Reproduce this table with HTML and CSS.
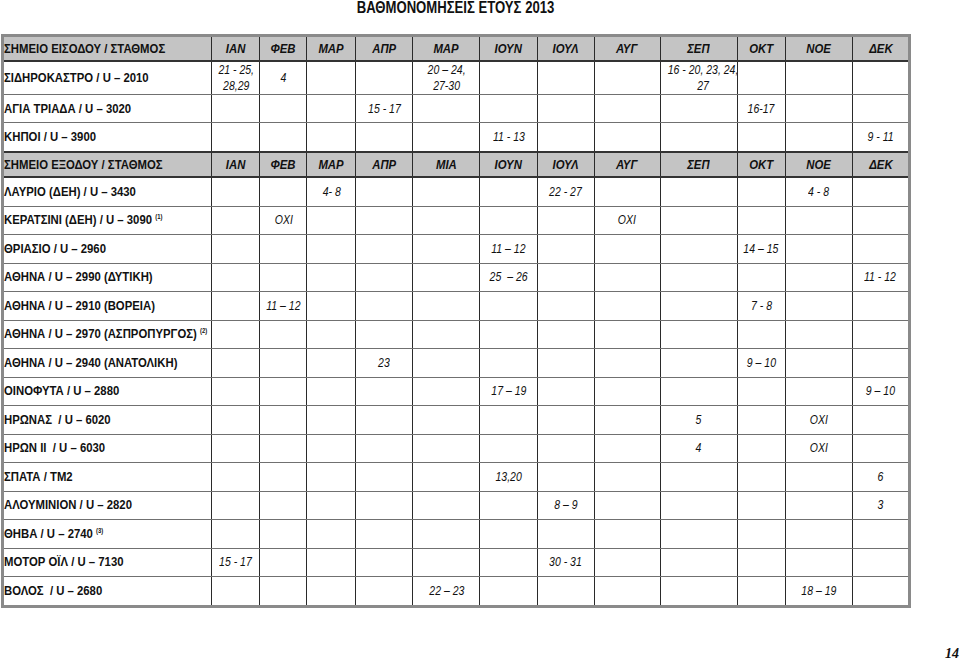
FILE: index.html
```html
<!DOCTYPE html>
<html lang="el">
<head>
<meta charset="utf-8">
<title>ΒΑΘΜΟΝΟΜΗΣΕΙΣ ΕΤΟΥΣ 2013</title>
<link rel="stylesheet" href="styles.css">
</head>
<body>
<div class="page">
  <div class="sheet">
    <h1 class="title"><span class="t">ΒΑΘΜΟΝΟΜΗΣΕΙΣ ΕΤΟΥΣ 2013</span></h1>
    <table class="grid">
      <colgroup>
        <col class="c-name"><col class="c48"><col class="c47"><col class="c49"><col class="c57"><col class="c67"><col class="c57"><col class="c57"><col class="c66"><col class="c77"><col class="c48"><col class="c67"><col class="c57">
      </colgroup>
      <tbody>
        <tr class="head">
          <th class="name"><span class="t">ΣΗΜΕΙΟ ΕΙΣΟΔΟΥ / ΣΤΑΘΜΟΣ</span></th>
          <th><span class="t">ΙΑΝ</span></th><th><span class="t">ΦΕΒ</span></th><th><span class="t">ΜΑΡ</span></th><th><span class="t">ΑΠΡ</span></th><th><span class="t">ΜΑΡ</span></th><th><span class="t">ΙΟΥΝ</span></th><th><span class="t">ΙΟΥΛ</span></th><th><span class="t">ΑΥΓ</span></th><th><span class="t">ΣΕΠ</span></th><th><span class="t">ΟΚΤ</span></th><th><span class="t">ΝΟΕ</span></th><th><span class="t">ΔΕΚ</span></th>
        </tr>
        <tr class="tall">
          <td class="name"><span class="t">ΣΙΔΗΡΟΚΑΣΤΡΟ / U – 2010</span></td>
          <td><span class="t">21 - 25,<br>28,29</span></td><td><span class="t">4</span></td><td></td><td></td><td><span class="t">20 – 24,<br>27-30</span></td><td></td><td></td><td></td><td><span class="t">16 - 20, 23, 24,<br>27</span></td><td></td><td></td><td></td>
        </tr>
        <tr class="r28">
          <td class="name"><span class="t">ΑΓΙΑ ΤΡΙΑΔΑ / U – 3020</span></td>
          <td></td><td></td><td></td><td><span class="t">15 - 17</span></td><td></td><td></td><td></td><td></td><td></td><td><span class="t">16-17</span></td><td></td><td></td>
        </tr>
        <tr class="r29">
          <td class="name"><span class="t">ΚΗΠΟΙ / U – 3900</span></td>
          <td></td><td></td><td></td><td></td><td></td><td><span class="t">11 - 13</span></td><td></td><td></td><td></td><td></td><td></td><td><span class="t">9 - 11</span></td>
        </tr>
        <tr class="head">
          <th class="name"><span class="t">ΣΗΜΕΙΟ ΕΞΟΔΟΥ / ΣΤΑΘΜΟΣ</span></th>
          <th><span class="t">ΙΑΝ</span></th><th><span class="t">ΦΕΒ</span></th><th><span class="t">ΜΑΡ</span></th><th><span class="t">ΑΠΡ</span></th><th><span class="t">ΜΙΑ</span></th><th><span class="t">ΙΟΥΝ</span></th><th><span class="t">ΙΟΥΛ</span></th><th><span class="t">ΑΥΓ</span></th><th><span class="t">ΣΕΠ</span></th><th><span class="t">ΟΚΤ</span></th><th><span class="t">ΝΟΕ</span></th><th><span class="t">ΔΕΚ</span></th>
        </tr>
        <tr class="row">
          <td class="name"><span class="t">ΛΑΥΡΙΟ (ΔΕΗ) / U – 3430</span></td>
          <td></td><td></td><td><span class="t">4- 8</span></td><td></td><td></td><td></td><td><span class="t">22 - 27</span></td><td></td><td></td><td></td><td><span class="t">4 - 8</span></td><td></td>
        </tr>
        <tr class="row">
          <td class="name"><span class="t">ΚΕΡΑΤΣΙΝΙ (ΔΕΗ) / U – 3090 <sup>(1)</sup></span></td>
          <td></td><td><span class="t">OXI</span></td><td></td><td></td><td></td><td></td><td></td><td><span class="t">OXI</span></td><td></td><td></td><td></td><td></td>
        </tr>
        <tr class="row">
          <td class="name"><span class="t">ΘΡΙΑΣΙΟ / U – 2960</span></td>
          <td></td><td></td><td></td><td></td><td></td><td><span class="t">11 – 12</span></td><td></td><td></td><td></td><td><span class="t">14 – 15</span></td><td></td><td></td>
        </tr>
        <tr class="row">
          <td class="name"><span class="t">ΑΘΗΝΑ / U – 2990 (ΔΥΤΙΚΗ)</span></td>
          <td></td><td></td><td></td><td></td><td></td><td><span class="t">25 &nbsp;– 26</span></td><td></td><td></td><td></td><td></td><td></td><td><span class="t">11 - 12</span></td>
        </tr>
        <tr class="row">
          <td class="name"><span class="t">ΑΘΗΝΑ / U – 2910 (ΒΟΡΕΙΑ)</span></td>
          <td></td><td><span class="t">11 – 12</span></td><td></td><td></td><td></td><td></td><td></td><td></td><td></td><td><span class="t">7 - 8</span></td><td></td><td></td>
        </tr>
        <tr class="row">
          <td class="name"><span class="t">ΑΘΗΝΑ / U – 2970 (ΑΣΠΡΟΠΥΡΓΟΣ) <sup>(2)</sup></span></td>
          <td></td><td></td><td></td><td></td><td></td><td></td><td></td><td></td><td></td><td></td><td></td><td></td>
        </tr>
        <tr class="row">
          <td class="name"><span class="t">ΑΘΗΝΑ / U – 2940 (ΑΝΑΤΟΛΙΚΗ)</span></td>
          <td></td><td></td><td></td><td><span class="t">23</span></td><td></td><td></td><td></td><td></td><td></td><td><span class="t">9 – 10</span></td><td></td><td></td>
        </tr>
        <tr class="row">
          <td class="name"><span class="t">ΟΙΝΟΦΥΤΑ / U – 2880</span></td>
          <td></td><td></td><td></td><td></td><td></td><td><span class="t">17 – 19</span></td><td></td><td></td><td></td><td></td><td></td><td><span class="t">9 – 10</span></td>
        </tr>
        <tr class="row">
          <td class="name"><span class="t">ΗΡΩΝΑΣ &nbsp;/ U – 6020</span></td>
          <td></td><td></td><td></td><td></td><td></td><td></td><td></td><td></td><td><span class="t">5</span></td><td></td><td><span class="t">OXI</span></td><td></td>
        </tr>
        <tr class="row">
          <td class="name"><span class="t">ΗΡΩΝ ΙΙ &nbsp;/ U – 6030</span></td>
          <td></td><td></td><td></td><td></td><td></td><td></td><td></td><td></td><td><span class="t">4</span></td><td></td><td><span class="t">OXI</span></td><td></td>
        </tr>
        <tr class="row">
          <td class="name"><span class="t">ΣΠΑΤΑ / ΤΜ2</span></td>
          <td></td><td></td><td></td><td></td><td></td><td><span class="t">13,20</span></td><td></td><td></td><td></td><td></td><td></td><td><span class="t">6</span></td>
        </tr>
        <tr class="row">
          <td class="name"><span class="t">ΑΛΟΥΜΙΝΙΟΝ / U – 2820</span></td>
          <td></td><td></td><td></td><td></td><td></td><td></td><td><span class="t">8 – 9</span></td><td></td><td></td><td></td><td></td><td><span class="t">3</span></td>
        </tr>
        <tr class="row">
          <td class="name"><span class="t">ΘΗΒΑ / U – 2740 <sup>(3)</sup></span></td>
          <td></td><td></td><td></td><td></td><td></td><td></td><td></td><td></td><td></td><td></td><td></td><td></td>
        </tr>
        <tr class="row">
          <td class="name"><span class="t">ΜΟΤΟΡ ΟΪΛ / U – 7130</span></td>
          <td><span class="t">15 - 17</span></td><td></td><td></td><td></td><td></td><td></td><td><span class="t">30 - 31</span></td><td></td><td></td><td></td><td></td><td></td>
        </tr>
        <tr class="row">
          <td class="name"><span class="t">ΒΟΛΟΣ &nbsp;/ U – 2680</span></td>
          <td></td><td></td><td></td><td></td><td><span class="t">22 – 23</span></td><td></td><td></td><td></td><td></td><td></td><td><span class="t">18 – 19</span></td><td></td>
        </tr>
      </tbody>
    </table>
  </div>
  <div class="folio">14</div>
</div>
</body>
</html>
```
FILE: styles.css
```css
html, body {
  margin: 0;
  padding: 0;
  background: #ffffff;
}

.page {
  width: 960px;
  height: 665px;
  overflow: hidden;
  font-family: "Liberation Sans", Arial, sans-serif;
  color: #111;
}

.sheet {
  width: 912px;
}

/* the source uses a narrow face: condense the regular one */
.t {
  display: inline-block;
  transform: scaleX(0.84);
  transform-origin: center center;
  white-space: nowrap;
}

.title {
  margin: 0;
  height: 34px;
  padding-top: 0;
  line-height: 16px;
  font-size: 16px;
  font-weight: bold;
  text-align: center;
  box-sizing: border-box;
}

.title .t {
  transform: scaleX(0.82);
}

.grid {
  table-layout: fixed;
  border-collapse: collapse;
  width: 910px;
  margin-left: 1px;
  border: 3px solid #8a8a8a;
}

.c-name { width: 209px; }
.c47 { width: 47px; }
.c48 { width: 48px; }
.c49 { width: 49px; }
.c57 { width: 57px; }
.c66 { width: 66px; }
.c67 { width: 67px; }
.c77 { width: 77px; }

.grid th,
.grid td {
  border-left: 1px solid #2a2a2a;
  border-right: 1px solid #2a2a2a;
  border-top: 1px solid #707070;
  border-bottom: 1px solid #707070;
  padding: 0;
  text-align: center;
  vertical-align: middle;
  font-size: 12.5px;
  font-style: italic;
  font-weight: normal;
  line-height: 16px;
  white-space: nowrap;
  overflow: hidden;
}

.grid .name {
  text-align: left;
  font-style: normal;
  font-weight: bold;
  font-size: 13.5px;
}

.grid .name .t {
  transform-origin: left center;
}

.grid tr.head th {
  background: #c4c4c4;
  font-weight: bold;
  font-size: 13.5px;
  height: 23px;
  border-top: 2px solid #333;
  border-bottom: 2px solid #333;
}

.grid tr.head th.name {
  font-style: normal;
}

.grid tr.tall td { height: 30px; }
.grid tr.row td { height: 27.5px; }
.grid tr.r28 td { height: 27px; }
.grid tr.r29 td { height: 28px; }

.grid sup {
  font-size: 7px;
  line-height: 0;
  vertical-align: 5px;
}

.folio {
  margin-top: 38px;
  text-align: right;
  padding-right: 1px;
  font-family: "Liberation Serif", "Times New Roman", serif;
  font-weight: bold;
  font-style: italic;
  font-size: 14px;
}
```
